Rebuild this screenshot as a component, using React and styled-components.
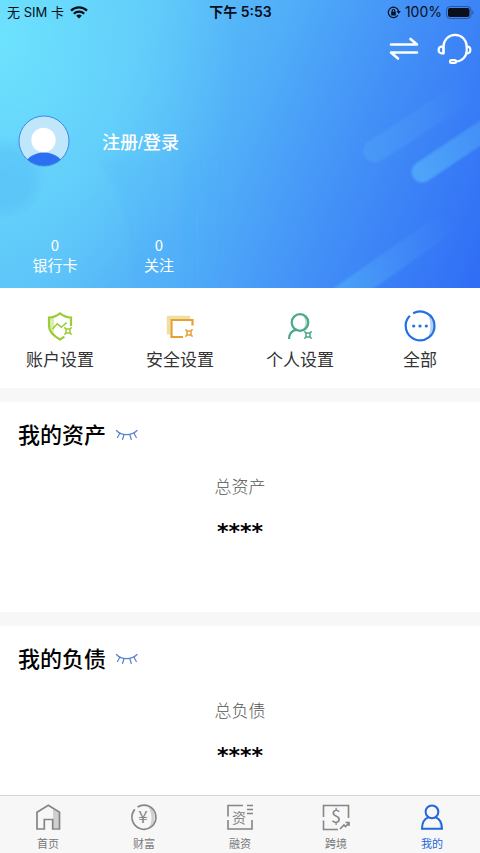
import React, { useState } from 'react';
import styled, { createGlobalStyle } from 'styled-components';

const GlobalStyle = createGlobalStyle`
  * {
    box-sizing: border-box;
  }

  body {
    margin: 0;
    font-family: "Liberation Sans", "Noto Sans CJK SC", sans-serif;
    background: #ffffff;
    color: #000000;
  }

  button {
    padding: 0;
    border: 0;
    background: none;
    font: inherit;
    color: inherit;
    cursor: pointer;
  }

  a {
    color: inherit;
    text-decoration: none;
  }

  svg {
    display: block;
    flex: none;
  }
`;

const Page = styled.div`
  display: flex;
  flex-direction: column;
  height: 100vh;
`;

const Content = styled.main`
  flex: 1;
  min-height: 0;
  display: flex;
  flex-direction: column;
  gap: 14px;
  overflow-y: auto;
  scrollbar-width: none;
  background: #f7f7f7;
`;

const Hero = styled.header`
  position: relative;
  overflow: hidden;
  color: #ffffff;
  background:
    radial-gradient(circle at 4px 178px, rgba(70, 165, 243, 0.3) 0, rgba(70, 165, 243, 0.25) 26px, transparent 42px),
    radial-gradient(ellipse 240px 280px at 0 40px, rgba(112, 232, 254, 0.8), transparent),
    linear-gradient(112deg, #5fc9f9 0%, #5bc0f8 27%, #51aff8 48%, #4493f7 68%, #397df6 86%, #2f6df5 100%);
`;

const Streaks = styled.svg`
  position: absolute;
  right: 0;
  top: 0;
`;

const HeroBody = styled.div`
  position: relative;
  padding-bottom: 13px;
`;

const StatusBar = styled.div`
  display: grid;
  grid-template-columns: 1fr auto 1fr;
  align-items: center;
  height: 24px;
  padding: 0 6px 0 7px;
  color: #0b0f1a;
  font-family: Inter, "Noto Sans CJK SC", sans-serif;
  font-size: 14px;
  line-height: 24px;
`;

const StatusSide = styled.div`
  display: flex;
  align-items: center;
  justify-content: ${props => (props.$end ? 'flex-end' : 'flex-start')};
  gap: 4px;
`;

const Carrier = styled.span`
  margin-right: 2px;
  font-size: 13px;
`;

const Clock = styled.time`
  font-weight: 600;
`;

const Tools = styled.div`
  display: flex;
  justify-content: flex-end;
  align-items: center;
  gap: 18px;
  height: 50px;
  padding-right: 8px;
`;

const Profile = styled.div`
  display: flex;
  align-items: center;
  gap: 32px;
  padding: 41px 18px 0;
`;

const LoginLink = styled.a`
  padding-top: 4px;
  font-size: 18px;
  font-weight: 500;
  line-height: 24px;
`;

const Stats = styled.div`
  display: flex;
  padding: 68px 3px 0;
`;

const Stat = styled.a`
  width: 104px;
  text-align: center;
  font-family: "Noto Sans CJK SC", sans-serif;
  font-size: 15px;
  line-height: 20px;
`;

const StatLine = styled.span`
  display: block;
`;

const TopBlock = styled.div`
  background: #ffffff;
`;

const Shortcuts = styled.nav`
  display: grid;
  grid-template-columns: repeat(4, 1fr);
  height: 100px;
  padding-top: 20px;
`;

const Shortcut = styled.a`
  display: flex;
  flex-direction: column;
  align-items: center;
  gap: 5px;
  font-size: 17px;
  line-height: 24px;
  color: #333333;
`;

const Panel = styled.section`
  flex: none;
  height: 210px;
  padding: 19px 18px 0;
  background: #ffffff;
`;

const PanelHead = styled.div`
  display: flex;
  align-items: center;
  gap: 9px;
`;

const PanelTitle = styled.h2`
  margin: 0;
  font-size: 22px;
  font-weight: 500;
  line-height: 30px;
`;

const Total = styled.dl`
  margin: 24px 0 0;
  text-align: center;
`;

const TotalLabel = styled.dt`
  font-size: 17px;
  font-weight: 300;
  line-height: 26px;
  color: #555555;
`;

const TotalValue = styled.dd`
  margin: 18px 0 0;
  font-family: "DejaVu Sans", sans-serif;
  font-size: 22px;
  font-weight: 700;
  line-height: 26px;
`;

const TabBar = styled.nav`
  flex: none;
  display: grid;
  grid-template-columns: repeat(5, 1fr);
  height: 58px;
  border-top: 1px solid #d4d4d4;
  background: #f7f7f7;
`;

const Tab = styled.a`
  display: flex;
  flex-direction: column;
  align-items: center;
  gap: 4px;
  padding-top: 6px;
  font-size: 11px;
  line-height: 16px;
  color: ${props => (props.$active ? '#2467dc' : '#777777')};
`;

const WifiIcon = () => (
  <svg width="18" height="13" viewBox="0 0 18 13" fill="none" stroke="currentColor" strokeWidth="2.3">
    <path d="M1 4.6a11.6 11.6 0 0 1 16 0" />
    <path d="M3.8 7.7a7.4 7.4 0 0 1 10.4 0" />
    <path d="M9 12.6 6.2 9.8a4 4 0 0 1 5.6 0z" fill="currentColor" stroke="none" />
  </svg>
);

const LockIcon = () => (
  <svg width="14" height="13" viewBox="0 0 14 13" fill="none" stroke="currentColor" strokeWidth="1.2">
    <path d="M11.6 5.2A5.2 5.2 0 1 0 10.8 9.4" />
    <path d="M9.6 5h4.200l-2.100 3z" fill="currentColor" stroke="none" />
    <rect x="4.2" y="5.8" width="4.6" height="3.6" rx="0.5" fill="currentColor" stroke="none" />
    <path d="M5.2 6V4.800a1.300 1.300 0 0 1 2.600 0V6" />
  </svg>
);

const BatteryIcon = () => (
  <svg width="28" height="13" viewBox="0 0 28 13" fill="none">
    <rect x="0.5" y="0.5" width="24.5" height="12" rx="3.6" stroke="#24427c" strokeOpacity="0.7" />
    <rect x="2" y="2" width="21.5" height="9" rx="2" fill="#0b0f1a" />
    <path d="M26.3 4.4c1.6.6 1.6 3.6 0 4.2z" fill="#24427c" fillOpacity="0.7" />
  </svg>
);

const SwapIcon = () => (
  <svg width="30" height="24" viewBox="0 0 30 24" fill="none" stroke="#ffffff" strokeWidth="2.6" strokeLinecap="round" strokeLinejoin="round">
    <path d="M2 7.500h26l-6.500-5.500" />
    <path d="M28 15.500H2l7 6" />
  </svg>
);

const HeadsetIcon = () => (
  <svg width="35" height="32" viewBox="0 0 35 32" fill="none" stroke="#ffffff" strokeWidth="2.2" strokeLinecap="round" strokeLinejoin="round">
    <path d="M6.500 20.300V13.400a11.600 11.600 0 0 1 23.200 0v4.300c0 6-4.800 10.600-10.700 10.800" />
    <path d="M6.500 13.600H4.600a2.800 2.800 0 0 0-2.900 2.700v1.300a2.800 2.800 0 0 0 2.900 2.700h1.900z" />
    <path d="M29.700 13.600h.8a2.700 2.700 0 0 1 2.800 2.700v1.300a2.700 2.700 0 0 1-2.800 2.700h-1.200" />
    <rect x="13" y="27.200" width="6" height="2.800" rx="1.400" />
  </svg>
);

const Avatar = () => (
  <svg width="52" height="52" viewBox="0 0 52 52">
    <defs>
      <clipPath id="avatar-clip">
        <circle cx="26" cy="26" r="25" />
      </clipPath>
    </defs>
    <circle cx="26" cy="26" r="25" fill="#bfe6fa" />
    <ellipse cx="26" cy="53" rx="20" ry="15.5" fill="#2c70f2" clipPath="url(#avatar-clip)" />
    <circle cx="25.5" cy="25" r="12.2" fill="#ffffff" />
    <circle cx="26" cy="26" r="25" fill="none" stroke="#3f86ea" />
  </svg>
);

const Spark = ({ x, y }) => (
  <g transform={`translate(${x} ${y})`}>
    <path d="M2 2h4v4H2zM2 2 .4.4M6 2 7.600.4M2 6 .4 7.600M6 6l1.600 1.600" strokeWidth="1.500" />
  </g>
);

const ShieldIcon = () => (
  <svg width="34" height="36" viewBox="0 0 34 36" fill="none" stroke="#9ccc35" strokeWidth="2.200">
    <path d="M6.500 10.500 11 8.500v17l-3-3.500-1.500-4z" fill="#dcedb0" stroke="none" />
    <path d="M28 18V9.600C23.500 9.300 20.400 8 17 5.300 13.600 8 10.500 9.300 6 9.600V18c0 6 4.800 10 11 13.500 1.600-.9 3.100-1.800 4.400-2.800" />
    <path d="m9.500 21 4.700-5.200 4.200 3.400 5.200-4.600" strokeWidth="1.5" />
    <Spark x={21} y={19} />
  </svg>
);

const SafeIcon = () => (
  <svg width="34" height="36" viewBox="0 0 34 36" fill="none" stroke="#e8a035" strokeWidth="2.200">
    <path d="M5.500 26.500V9.500H27" stroke="#eee0a0" strokeWidth="3.400" />
    <path d="M29.500 17.500V12H8.500v17H20" />
    <Spark x={22} y={21} />
  </svg>
);

const PersonIcon = () => (
  <svg width="34" height="36" viewBox="0 0 34 36" fill="none" stroke="#4aa88c" strokeWidth="2.200">
    <path d="M20 8a10 10 0 0 1 0 13c6-2 6-11 0-13z" fill="#b4dccf" stroke="none" />
    <circle cx="17" cy="14.500" r="8.300" />
    <path d="M6 31c0-5 3-8.400 7.800-9.400" />
    <Spark x={21} y={23} />
  </svg>
);

const MoreIcon = () => (
  <svg width="34" height="36" viewBox="0 0 34 36" fill="none" stroke="#2470e8" strokeWidth="2.200">
    <path d="M25 6a15 15 0 0 1 0 24c3-7 3-17 0-24z" fill="#b5d1f8" stroke="none" />
    <path d="M9.500 5.700A14.400 14.400 0 1 1 6.300 8.400" transform="rotate(3 17 18)" />
    <g fill="#2470e8" stroke="none">
      <circle cx="10.700" cy="18" r="1.600" />
      <circle cx="17" cy="18" r="1.600" />
      <circle cx="23.300" cy="18" r="1.600" />
    </g>
  </svg>
);

const ClosedEyeIcon = () => (
  <svg width="24" height="14" viewBox="0 0 24 14" fill="none" stroke="#5a83cc" strokeWidth="1.200" strokeLinecap="round">
    <path d="M1.500 1.500C6.500 7 16.500 7 22 1.500" />
    <path d="M4.800 4.200 2.500 8.500M9 5.800 7.500 10.500M14.800 5.800 16.300 10.500M19 4.200l2.300 4.300" />
  </svg>
);

const HomeIcon = () => (
  <svg width="30" height="30" viewBox="0 0 30 30" fill="none" stroke="#858585" strokeWidth="1.700">
    <path d="M20 7.500 26 11v15h-6z" fill="#d0d0d0" stroke="none" />
    <path d="M4 27V10.300l11.300-7 11.200 7v16.700h-6.800v-9.500h-8.400v9.500z" />
  </svg>
);

const WealthIcon = () => (
  <svg width="30" height="30" viewBox="0 0 30 30" fill="none" stroke="#858585" strokeWidth="1.700">
    <path d="M19 4.500c7.500 2 9.500 16 1 21.500 3.500-6 3.500-15-1-21.500z" fill="#cfcfcf" stroke="none" />
    <path d="M8.600 5A12 12 0 1 1 5.800 7.400" />
    <text x="14" y="21" textAnchor="middle" fontFamily="Noto Sans CJK SC" fontSize="17" fill="#858585" stroke="none">¥</text>
  </svg>
);

const FinanceIcon = () => (
  <svg width="30" height="30" viewBox="0 0 30 30" fill="none" stroke="#858585" strokeWidth="1.600">
    <path d="M18 3.500H3v11M3 18v9h24v-9M22 3.500h6M22 7.500h6M22 11.500h6" />
    <text x="14" y="21" textAnchor="middle" fontSize="14" fill="#858585" stroke="none">资</text>
  </svg>
);

const BorderIcon = () => (
  <svg width="30" height="30" viewBox="0 0 30 30" fill="none" stroke="#858585" strokeWidth="1.600">
    <path d="M2.500 15V3.500h25V16M2.500 18.500v9H17M19 27l4-4 1.500 1.500 3.500-3.500M24.500 20.500h3.500v3.500" />
    <text x="15" y="21" textAnchor="middle" fontFamily="Noto Sans CJK SC" fontSize="18" fill="#858585" stroke="none">$</text>
  </svg>
);

const MineIcon = () => (
  <svg width="30" height="30" viewBox="0 0 30 30" fill="none" stroke="#2467dc" strokeWidth="2">
    <path d="M17 5c4 3 4 8 0 11 5 1 6 5 6 10h2.500c0-6-3-9-6.500-10.500C23 12 22 6 17 5z" fill="#a9cdf8" stroke="none" />
    <circle cx="15" cy="9.800" r="6.400" />
    <path d="M11.200 15.400C7.200 17 5 20.500 5 26.800h20c0-6.300-2.200-9.800-6.200-11.400" />
  </svg>
);

const shortcuts = [
  { label: '账户设置', Icon: ShieldIcon },
  { label: '安全设置', Icon: SafeIcon },
  { label: '个人设置', Icon: PersonIcon },
  { label: '全部', Icon: MoreIcon },
];

const tabs = [
  { label: '首页', Icon: HomeIcon },
  { label: '财富', Icon: WealthIcon },
  { label: '融资', Icon: FinanceIcon },
  { label: '跨境', Icon: BorderIcon },
  { label: '我的', Icon: MineIcon },
];

const HeroStreaks = () => (
  <Streaks width="480" height="288" viewBox="0 0 480 288" fill="none" strokeLinecap="round" aria-hidden="true">
    <defs>
      <linearGradient id="streak-a" gradientUnits="userSpaceOnUse" x1="370" y1="152" x2="470" y2="88">
        <stop offset="0" stopColor="#52a8f8" stopOpacity="0.4" />
        <stop offset="1" stopColor="#52a8f8" stopOpacity="0" />
      </linearGradient>
      <linearGradient id="streak-b" gradientUnits="userSpaceOnUse" x1="420" y1="172" x2="500" y2="118">
        <stop offset="0" stopColor="#52aaf9" stopOpacity="0.85" />
        <stop offset="1" stopColor="#4897f8" stopOpacity="0.6" />
      </linearGradient>
      <linearGradient id="streak-c" gradientUnits="userSpaceOnUse" x1="340" y1="292" x2="450" y2="212">
        <stop offset="0" stopColor="#4fabf8" stopOpacity="0.7" />
        <stop offset="1" stopColor="#4a94f8" stopOpacity="0" />
      </linearGradient>
      <linearGradient id="curve-fade" x1="0" y1="0" x2="1" y2="0">
        <stop offset="0" stopColor="#4a9cf8" stopOpacity="0.1" />
        <stop offset="1" stopColor="#4a9cf8" stopOpacity="0" />
      </linearGradient>
      <filter id="streak-soft">
        <feGaussianBlur stdDeviation="1" />
      </filter>
    </defs>
    <g filter="url(#streak-soft)">
      <path d="M98 160C124 195 135 240 132 292H230V160z" fill="url(#curve-fade)" />
      <path d="M375 151 490 76" stroke="url(#streak-a)" strokeWidth="23" />
      <path d="M422 172 500 120" stroke="url(#streak-b)" strokeWidth="21" />
      <path d="M340 298 462 212" stroke="url(#streak-c)" strokeWidth="23" />
    </g>
  </Streaks>
);

const MaskedTotal = ({ title, label }) => {
  const [hidden, setHidden] = useState(true);

  return (
    <Panel>
      <PanelHead>
        <PanelTitle>{title}</PanelTitle>
        <button type="button" aria-label="显示或隐藏金额" aria-pressed={hidden} onClick={() => setHidden(!hidden)}>
          <ClosedEyeIcon />
        </button>
      </PanelHead>
      <Total>
        <TotalLabel>{label}</TotalLabel>
        <TotalValue>{hidden ? '****' : '0.00'}</TotalValue>
      </Total>
    </Panel>
  );
};

const App = () => (
  <>
    <GlobalStyle />
    <Page>
      <Content>
        <TopBlock>
          <Hero>
            <HeroStreaks />
            <HeroBody>
              <StatusBar>
                <StatusSide>
                  <Carrier>无 SIM 卡</Carrier>
                  <WifiIcon />
                </StatusSide>
                <Clock>下午 5:53</Clock>
                <StatusSide $end>
                  <LockIcon />
                  <span>100%</span>
                  <BatteryIcon />
                </StatusSide>
              </StatusBar>
              <Tools>
                <button type="button" aria-label="切换"><SwapIcon /></button>
                <button type="button" aria-label="客服"><HeadsetIcon /></button>
              </Tools>
              <Profile>
                <Avatar />
                <LoginLink href="#login">注册/登录</LoginLink>
              </Profile>
              <Stats>
                <Stat href="#cards">
                  <StatLine>0</StatLine>
                  <StatLine>银行卡</StatLine>
                </Stat>
                <Stat href="#follow">
                  <StatLine>0</StatLine>
                  <StatLine>关注</StatLine>
                </Stat>
              </Stats>
            </HeroBody>
          </Hero>
          <Shortcuts>
            {shortcuts.map(({ label, Icon }) => (
              <Shortcut key={label} href="#settings">
                <Icon />
                {label}
              </Shortcut>
            ))}
          </Shortcuts>
        </TopBlock>
        <MaskedTotal title="我的资产" label="总资产" />
        <MaskedTotal title="我的负债" label="总负债" />
      </Content>
      <TabBar>
        {tabs.map(({ label, Icon }) => (
          <Tab key={label} href="#tab" $active={label === '我的'}>
            <Icon />
            {label}
          </Tab>
        ))}
      </TabBar>
    </Page>
  </>
);

export default App;
